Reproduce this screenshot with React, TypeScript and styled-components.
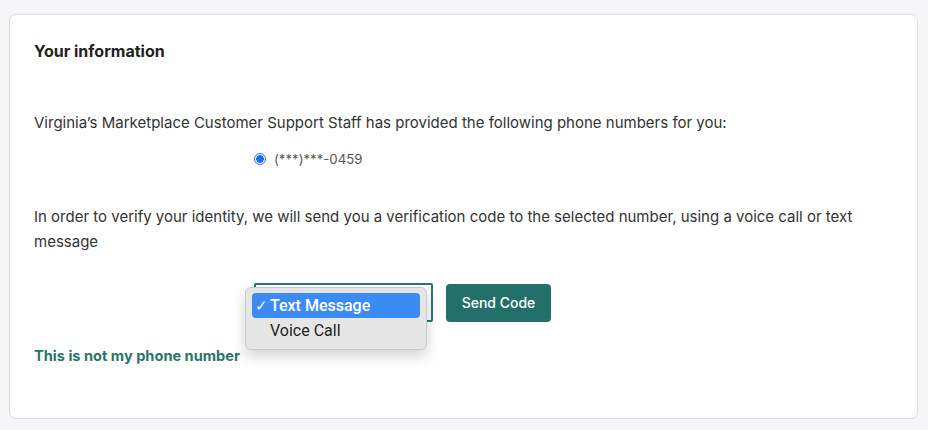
import React from "react";
import styled, { createGlobalStyle } from "styled-components";

const Global = createGlobalStyle`
  html, body { margin: 0; padding: 0; background: #f6f6f8; }
  body { font-family: Inter, "Open Sans", sans-serif; color: #2d2d2d; }
`;

const Page = styled.div`
  padding: 14px 10px 10px 9px;
`;

const Card = styled.section`
  background: #fff;
  border: 1px solid #dcdcde;
  border-radius: 7px;
  height: 405px;
  box-sizing: border-box;
  padding: 26px 24px 0 24px;
`;

const Title = styled.h2`
  margin: 0;
  font-size: 16px;
  line-height: 20px;
  font-weight: 700;
  color: #222;
`;

const Para = styled.p<{ $top: number }>`
  margin: ${(p) => p.$top}px 0 0 0;
  font-size: 15px;
  line-height: 25px;
  color: #333;
  max-width: 830px;
`;

const Indented = styled.div<{ $top: number }>`
  margin-top: ${(p) => p.$top}px;
  padding-left: 220px;
  display: flex;
  align-items: center;
`;

const RadioLabel = styled.label`
  display: flex;
  align-items: center;
  gap: 8px;
  font-size: 13.2px;
  color: #555;
`;

const RadioDot = styled.span`
  width: 12px;
  height: 12px;
  border-radius: 50%;
  border: 1px solid #2f6fe0;
  box-sizing: border-box;
  background: radial-gradient(circle, #1470f0 0 3.6px, #fff 4px);
`;

const SelectWrap = styled.div`
  position: relative;
  width: 179px;
  height: 39px;
  box-sizing: border-box;
  border: 2px solid #2a7670;
  border-radius: 2px;
`;

const Popup = styled.ul`
  position: absolute;
  left: -11px;
  top: 2px;
  width: 182px;
  margin: 0;
  padding: 5px 6px 6px 6px;
  list-style: none;
  box-sizing: border-box;
  background: #e6e6e6;
  border: 1px solid #c9c9c9;
  border-radius: 6px;
  box-shadow: 0 6px 14px rgba(0, 0, 0, 0.18);
  font-family: "Helvetica Neue", Roboto, "Liberation Sans", sans-serif;
`;

const Option = styled.li<{ $selected?: boolean }>`
  height: 25px;
  display: flex;
  align-items: center;
  border-radius: 4px;
  padding-left: ${(p) => (p.$selected ? "3px" : "18px")};
  gap: 3px;
  font-size: 16px;
  font-weight: ${(p) => (p.$selected ? 500 : 400)};
  color: ${(p) => (p.$selected ? "#fff" : "#222")};
  background: ${(p) => (p.$selected ? "#3c8bf5" : "transparent")};
`;

const Check = styled.span`
  font-size: 15px;
  width: 12px;
`;

const Button = styled.button`
  margin-left: 13px;
  height: 38px;
  width: 105px;
  border: none;
  border-radius: 4px;
  background: #23706b;
  color: #fff;
  font-family: Inter, sans-serif;
  font-size: 14px;
  font-weight: 500;
`;

const Link = styled.a`
  display: block;
  margin-top: 25px;
  font-size: 14.6px;
  font-weight: 700;
  color: #2a7468;
  text-decoration: none;
`;

export default function App() {
  return (
    <>
      <Global />
      <Page>
        <Card>
          <Title>Your information</Title>
          <Para $top={49}>
            Virginia’s Marketplace Customer Support Staff has provided the following phone numbers for you:
          </Para>
          <Indented $top={16}>
            <RadioLabel>
              <RadioDot />
              (***)***-0459
            </RadioLabel>
          </Indented>
          <Para $top={37}>
            In order to verify your identity, we will send you a verification code to the selected number, using a voice call or text message
          </Para>
          <Indented $top={29}>
            <SelectWrap>
              <Popup>
                <Option $selected>
                  <Check>✓</Check>Text Message
                </Option>
                <Option>Voice Call</Option>
              </Popup>
            </SelectWrap>
            <Button>Send Code</Button>
          </Indented>
          <Link href="#">This is not my phone number</Link>
        </Card>
      </Page>
    </>
  );
}
